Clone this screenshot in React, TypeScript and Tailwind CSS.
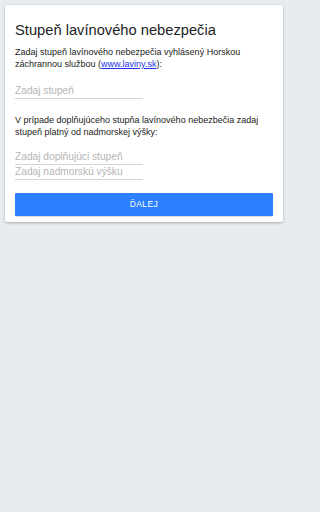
import React from "react";

export default function App() {
  return (
    <div className="min-h-screen bg-[#e9ecef] font-['Liberation_Sans',Arial,sans-serif] text-[#222]">
      <div className="w-[288px] p-[5px]">
        {/* Card */}
        <div className="bg-white rounded-[2px] shadow-[0_1px_3px_rgba(0,0,0,0.28)] px-[10px] pt-[16px] pb-[6px]">
          <h1 className="text-[14.7px] leading-[18px] text-[#1e1e1e]">Stupeň lavínového nebezpečia</h1>

          <p className="mt-[7px] text-[9px] leading-[12px]">
            Zadaj stupeň lavínového nebezpečia vyhlásený Horskou záchrannou službou (
            <a href="#" className="text-[#2233ee] underline">www.laviny.sk</a>):
          </p>

          <input
            placeholder="Zadaj stupeň"
            className="mt-[14px] block w-[128px] h-[15px] p-0 border-b border-[#d4d4d4] text-[10.2px] placeholder:text-[#b5b5b5] outline-none"
          />

          <p className="mt-[15px] text-[9px] leading-[12px]">
            V prípade doplňujúceho stupňa lavínového nebezbečia zadaj stupeň platný od nadmorskej výšky:
          </p>

          <div className="mt-[12px] flex flex-col">
            <input
              placeholder="Zadaj doplňujúci stupeň"
              className="block w-[128px] h-[15px] p-0 border-b border-[#d4d4d4] text-[10.2px] placeholder:text-[#b5b5b5] outline-none"
            />
            <input
              placeholder="Zadaj nadmorskú výšku"
              className="block w-[128px] h-[15px] p-0 border-b border-[#d4d4d4] text-[10.2px] placeholder:text-[#b5b5b5] outline-none"
            />
          </div>

          <button className="mt-[13px] w-full h-[23px] bg-[#2d80ff] text-white text-[8.5px] tracking-[0.4px] rounded-[1px] shadow-[0_1px_1px_rgba(0,0,0,0.15)]">
            ĎALEJ
          </button>
        </div>
      </div>
    </div>
  );
}
